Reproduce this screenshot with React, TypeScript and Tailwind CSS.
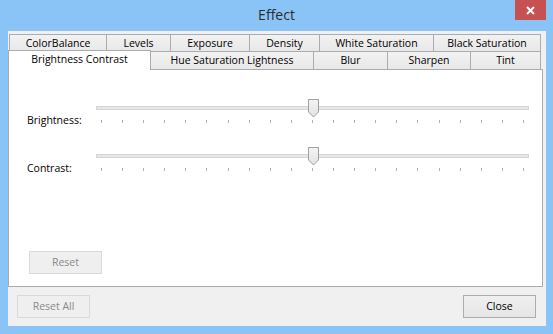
import React from "react";

const topTabs = [
  { label: "ColorBalance", w: "w-[97px]" },
  { label: "Levels", w: "w-[64px]" },
  { label: "Exposure", w: "w-[79px]" },
  { label: "Density", w: "w-[70px]" },
  { label: "White Saturation", w: "w-[114px]" },
  { label: "Black Saturation", w: "w-[108px] border-r" },
];

const bottomTabs = [
  { label: "Hue Saturation Lightness", w: "w-[163px] -ml-px" },
  { label: "Blur", w: "w-[74px]" },
  { label: "Sharpen", w: "w-[83px]" },
  { label: "Tint", w: "w-[71px] border-r" },
];

function Slider() {
  return (
    <div className="relative w-[433px] h-[25px]">
      <div className="absolute left-0 right-0 top-[7px] h-[4px] border border-[#d6d6d6] bg-[#e7e7e7]" />
      <div className="absolute left-0 right-0 top-[21px] flex justify-between px-[5px]">
        {Array.from({ length: 21 }).map((_, i) => (
          <div key={i} className="w-px h-[3px] bg-[#b5b5b5]" />
        ))}
      </div>
      {/* thumb */}
      <svg className="absolute left-[212px] top-0" width="11" height="19" viewBox="0 0 11 19">
        <defs>
          <linearGradient id="thumbFill" x1="0" y1="0" x2="0" y2="1">
            <stop offset="0" stopColor="#f4f4f4" />
            <stop offset="1" stopColor="#e2e2e2" />
          </linearGradient>
        </defs>
        <path d="M0.5 0.5 H10.5 V13 L5.5 18 L0.5 13 Z" fill="url(#thumbFill)" stroke="#a0a0a0" />
      </svg>
    </div>
  );
}

export default function App() {
  return (
    <div className="w-[553px] h-[334px] bg-[#8ac4f6] flex flex-col font-['Segoe_UI','Open_Sans',sans-serif] text-[10.5px] text-black">
      {/* Title bar */}
      <div className="relative h-[31px] flex items-center justify-center">
        <span className="text-[14px] text-[#2b2b2b] leading-none pb-px">Effect</span>
        <div className="absolute right-[7px] top-0 w-[31px] h-[20px] bg-[#c75050] flex items-center justify-center">
          <svg width="9" height="9" viewBox="0 0 9 9">
            <path d="M1 1 L8 8 M8 1 L1 8" stroke="white" strokeWidth="2" />
          </svg>
        </div>
      </div>

      {/* Client area */}
      <div className="ml-[8px] w-[538px] h-[295px] bg-[#f0f0f0] flex flex-col pt-[3px]">
        {/* upper tab row */}
        <div className="flex ml-px h-[17px]">
          {topTabs.map((t) => (
            <div
              key={t.label}
              className={`${t.w} h-[17px] border-l border-t border-[#acacac] bg-gradient-to-b from-[#f2f2f2] to-[#e8e8e8] flex justify-center leading-[16px]`}
            >
              {t.label}
            </div>
          ))}
        </div>
        {/* lower tab row */}
        <div className="flex h-[18px] items-start">
          <div className="relative z-10 -mt-px w-[143px] h-[20px] border-l border-t border-r border-[#acacac] bg-white flex justify-center leading-[16px]">
            Brightness Contrast
          </div>
          {bottomTabs.map((t) => (
            <div
              key={t.label}
              className={`${t.w} h-[18px] border-l border-t border-[#acacac] bg-gradient-to-b from-[#f2f2f2] to-[#e8e8e8] flex justify-center leading-[17px]`}
            >
              {t.label}
            </div>
          ))}
        </div>

        {/* tab page */}
        <div className="w-[535px] h-[218px] border border-[#acacac] bg-white flex flex-col pt-[29px]">
          <div className="flex h-[48px]">
            <div className="w-[87px] pl-[18px] mt-[14px] leading-[15px]">Brightness:</div>
            <Slider />
          </div>
          <div className="flex h-[48px]">
            <div className="w-[87px] pl-[18px] mt-[14px] leading-[15px]">Contrast:</div>
            <Slider />
          </div>
          <div className="mt-auto mb-[12px] ml-[20px] w-[73px] h-[23px] border border-[#d9d9d9] bg-[#efefef] text-[#8a8a8a] flex items-center justify-center">
            Reset
          </div>
        </div>

        {/* bottom buttons */}
        <div className="flex justify-between mt-[8px] pl-[9px] pr-[10px]">
          <div className="w-[73px] h-[23px] border border-[#d9d9d9] bg-[#efefef] text-[#8a8a8a] flex items-center justify-center">
            Reset All
          </div>
          <div className="w-[73px] h-[23px] border border-[#adadad] bg-gradient-to-b from-[#f0f0f0] to-[#e5e5e5] flex items-center justify-center">
            Close
          </div>
        </div>
      </div>
    </div>
  );
}
